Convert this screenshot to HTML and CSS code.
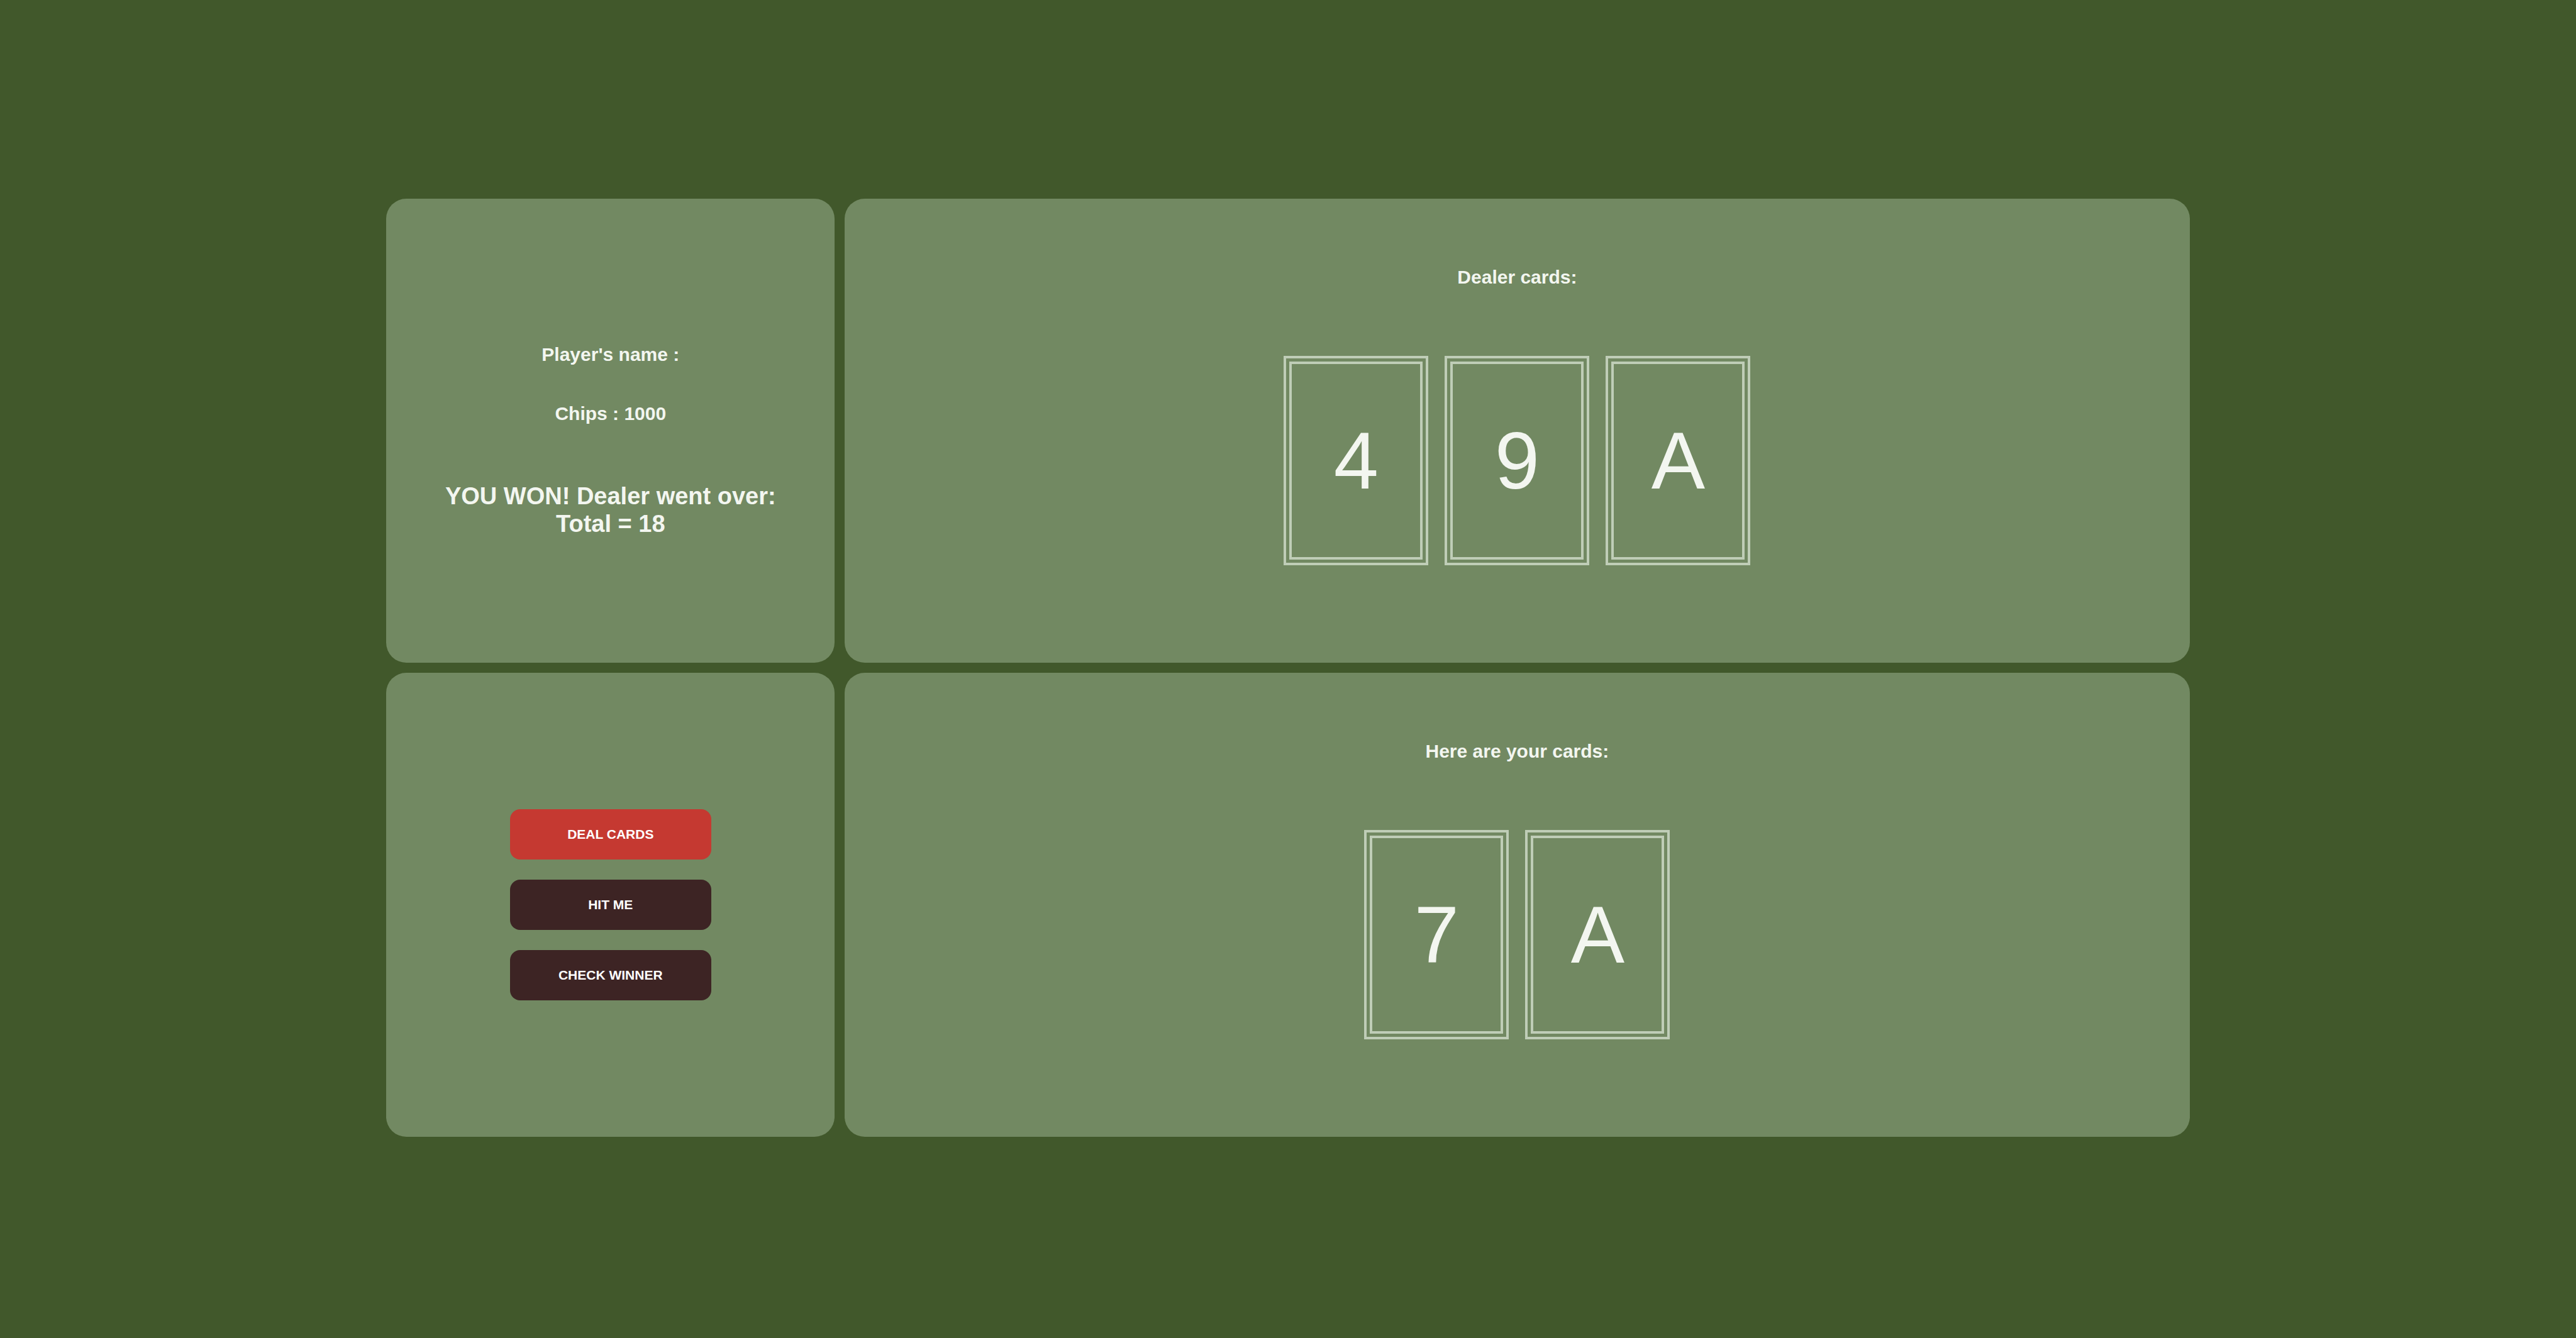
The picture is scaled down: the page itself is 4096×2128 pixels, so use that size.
FILE: index.html
```
<!DOCTYPE html>
<html lang="en">
<head>
  <meta charset="utf-8">
  <meta name="viewport" content="width=device-width, initial-scale=1">
  <title>Blackjack</title>
  <link rel="stylesheet" href="styles.css">
</head>
<body>
  <main class="table">
    <section class="panel info">
      <h3 class="label">Player's name :</h3>
      <h3 class="label">Chips : 1000</h3>
      <h2 class="status">YOU WON! Dealer went over: Total = 18</h2>
    </section>
    <section class="panel hand">
      <h3 class="label">Dealer cards:</h3>
      <div class="cards">
        <div class="card">4</div>
        <div class="card">9</div>
        <div class="card">A</div>
      </div>
    </section>
    <section class="panel actions">
      <button type="button" class="button button-deal">DEAL CARDS</button>
      <button type="button" class="button">HIT ME</button>
      <button type="button" class="button">CHECK WINNER</button>
    </section>
    <section class="panel hand">
      <h3 class="label">Here are your cards:</h3>
      <div class="cards">
        <div class="card">7</div>
        <div class="card">A</div>
      </div>
    </section>
  </main>
</body>
</html>
```
FILE: styles.css
```
* {
  box-sizing: border-box;
}

body {
  margin: 0;
  min-height: 100vh;
  padding-bottom: 4px;
  display: flex;
  align-items: center;
  justify-content: center;
  background: #41582b;
  color: #f3f6f0;
  font-family: "Liberation Sans", Helvetica, Arial, sans-serif;
}

.table {
  width: 70%;
  display: grid;
  grid-template-columns: 1fr 3fr;
  gap: 16px;
}

.panel {
  display: flex;
  flex-direction: column;
  align-items: center;
  border-radius: 32px;
  background: #728962;
}

.label,
.status {
  margin: 0;
  font-weight: bold;
  text-align: center;
}

.label {
  font-size: 30px;
  line-height: 34px;
}

.info {
  justify-content: center;
  gap: 60px;
  padding: 32px 64px 0;
}

.status {
  margin-top: 32px;
  font-size: 38px;
  line-height: 44px;
}

.hand {
  gap: 108px;
  padding: 108px 32px 155px;
}

.cards {
  display: flex;
  flex-wrap: wrap;
  justify-content: center;
  gap: 26px;
}

.card {
  width: 230px;
  height: 333px;
  display: flex;
  align-items: center;
  justify-content: center;
  border: 13px double #bfcdb7;
  font-size: 128px;
}

.actions {
  justify-content: center;
  gap: 32px;
}

.button {
  width: 320px;
  height: 80px;
  padding: 0;
  border: 0;
  border-radius: 16px;
  background: #3d2424;
  color: #fff;
  font-family: inherit;
  font-size: 21px;
  font-weight: bold;
  cursor: pointer;
}

.button-deal {
  background: #c53931;
}
```
